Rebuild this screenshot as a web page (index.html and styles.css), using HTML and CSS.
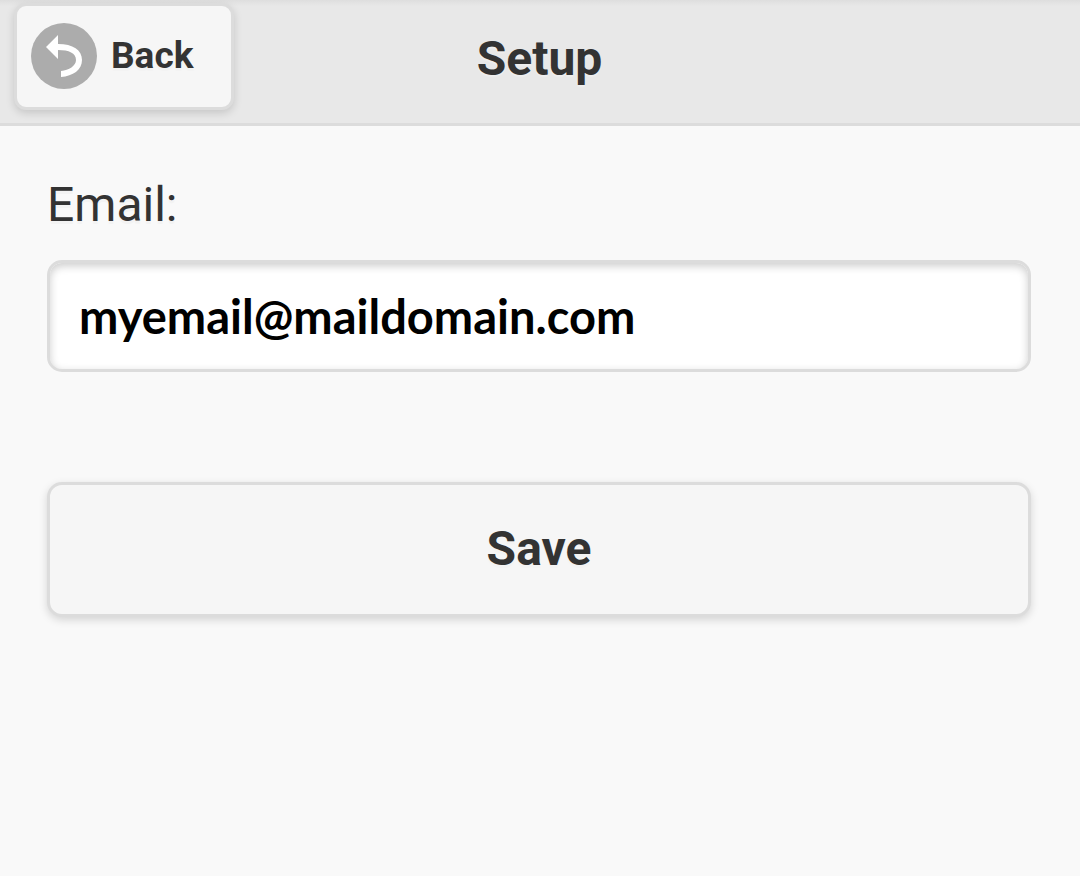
FILE: index.html
```html
<!DOCTYPE html>
<html lang="en">
<head>
<meta charset="utf-8">
<meta name="viewport" content="width=device-width, initial-scale=1">
<title>Setup</title>
<link rel="stylesheet" href="styles.css">
</head>
<body>
<header class="header">
  <button class="button back" type="button">
    <svg class="back-icon" viewBox="0 0 66 66" aria-hidden="true">
      <circle cx="33" cy="33" r="33" fill="#acacac"/>
      <path fill="#fff" d="M15 24 27 12V21C42 21 51 27 51 37C51 47 42 53 30 54V48C38 47 45 43 45 37C45 30 38 27 27 27V36Z"/>
    </svg>
    <span>Back</span>
  </button>
  <h1 class="title">Setup</h1>
</header>
<main class="content">
  <form class="form">
    <label class="label" for="email">Email:</label>
    <input class="field" id="email" type="email" value="myemail@maildomain.com">
    <button class="button save" type="button">Save</button>
  </form>
</main>
</body>
</html>
```
FILE: styles.css
```css
* {
  box-sizing: border-box;
}

body {
  margin: 0;
  min-height: 100vh;
  background: #f9f9f9;
  color: #333;
  font-family: Roboto, "Liberation Sans", sans-serif;
  font-size: 48px;
  line-height: 60px;
  text-shadow: 0 3px 0 #f3f3f3;
}

.header {
  display: grid;
  grid-template-columns: 1fr auto 1fr;
  align-items: start;
  padding: 3px 15px 13px 14px;
  border-bottom: 3px solid #dcdcdc;
  background: linear-gradient(#dedede, #e8e8e8 6px);
}

.title {
  margin: 0;
  padding-top: 26px;
  font-size: 48px;
  line-height: 60px;
  font-weight: 700;
  text-shadow: 0 2px 1px #eee;
}

.button {
  border: 3px solid #dcdcdc;
  border-radius: 15px;
  background: #f6f6f6;
  color: #333;
  font-family: inherit;
  font-weight: 700;
  text-shadow: inherit;
  box-shadow: 0 3px 9px rgba(0, 0, 0, 0.15);
  cursor: pointer;
}

.back {
  display: flex;
  align-items: center;
  gap: 14px;
  justify-self: start;
  padding: 17px 38px 18px 14px;
  border-radius: 12px;
  font-size: 37px;
  line-height: 60px;
}

.back-icon {
  width: 66px;
  height: 66px;
}

.content {
  padding: 49px 49px 48px 47px;
}

.form {
  display: flex;
  flex-direction: column;
}

.label {
  margin-bottom: 25px;
}

.field {
  height: 112px;
  padding: 0 29px;
  border: 3px solid #dcdcdc;
  border-radius: 15px;
  background: #fff;
  box-shadow: inset 0 3px 9px rgba(0, 0, 0, 0.2);
  color: #000;
  font-family: Lato, "Open Sans", sans-serif;
  font-size: 47px;
  font-weight: 700;
}

.save {
  margin-top: 110px;
  padding: 34px 34px 35px;
  font-size: 48px;
  line-height: 60px;
}
```
